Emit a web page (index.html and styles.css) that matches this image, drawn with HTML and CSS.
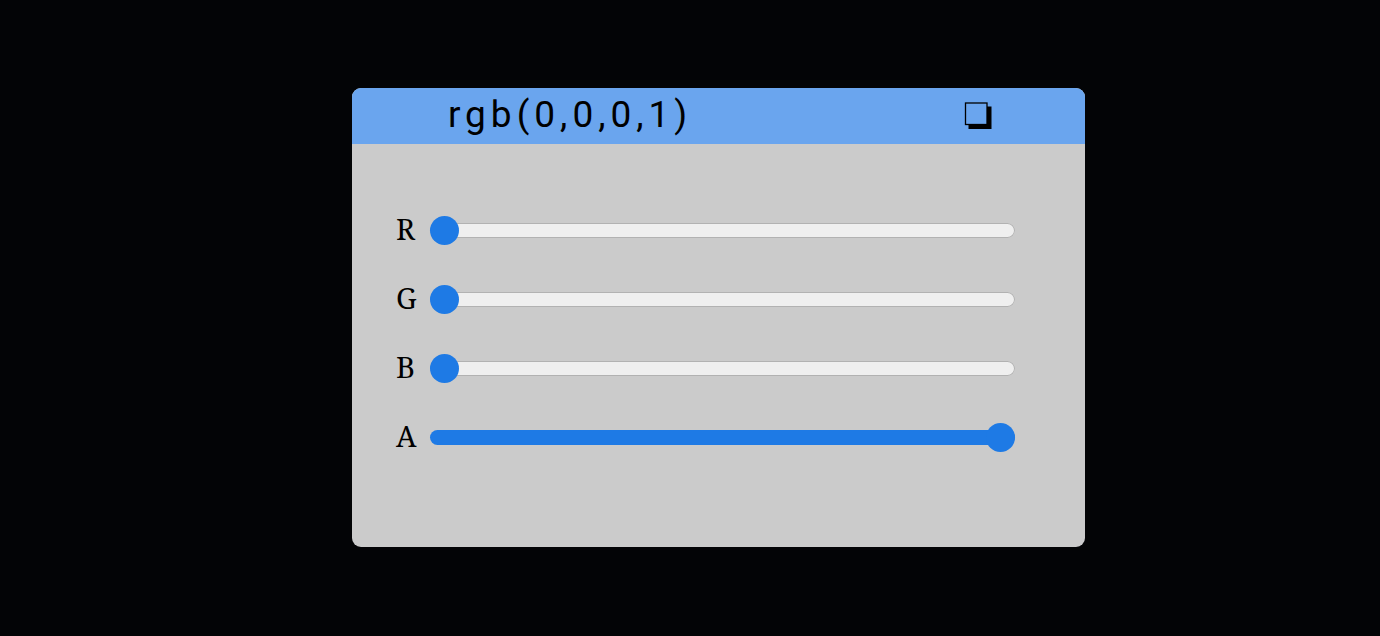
FILE: index.html
```html
<!DOCTYPE html>
<html lang="en">
<head>
<meta charset="utf-8">
<title>Color picker</title>
<meta name="viewport" content="width=device-width, initial-scale=1">
<link rel="stylesheet" href="styles.css">
</head>
<body>
<main class="picker">
  <header class="picker-header">
    <output class="color-code" for="red green blue alpha">rgb(0,0,0,1)</output>
    <button class="copy" type="button" aria-label="Copy color">
      <svg class="copy-icon" viewBox="0 0 28 28" aria-hidden="true">
        <path d="M4.500 22.500H22.500V4.500H27.500V27H4.500Z" fill="#000"/>
        <rect x="1.500" y="1" width="21.500" height="21.500" fill="#6aa5ee" stroke="#000" stroke-width="1.300"/>
      </svg>
    </button>
  </header>
  <div class="channels">
    <div class="channel"><label for="red">R</label><input class="slider" id="red" type="range" min="0" max="255" value="0"></div>
    <div class="channel"><label for="green">G</label><input class="slider" id="green" type="range" min="0" max="255" value="0"></div>
    <div class="channel"><label for="blue">B</label><input class="slider" id="blue" type="range" min="0" max="255" value="0"></div>
    <div class="channel"><label for="alpha">A</label><input class="slider slider-full" id="alpha" type="range" min="0" max="1" step="0.1" value="1"></div>
  </div>
</main>
</body>
</html>
```
FILE: styles.css
```css
* {
  box-sizing: border-box;
}

body {
  margin: 0;
  padding: 88px 0;
  background: #030406;
  color: #000;
}

.picker {
  width: 53.1%;
  margin-left: 25.5%;
  padding-bottom: 90px;
  overflow: hidden;
  border-radius: 9px;
  background: #cbcbcb;
}

.picker-header {
  display: flex;
  align-items: center;
  justify-content: space-between;
  height: 56px;
  padding: 0 93px 0 96px;
  background: #6aa5ee;
}

.color-code {
  padding-bottom: 2px;
  font: 37px/52px Roboto, sans-serif;
  letter-spacing: 5px;
}

.copy {
  display: flex;
  padding: 0;
  border: 0;
  background: none;
}

.copy-icon {
  width: 28px;
  height: 28px;
}

.channels {
  display: grid;
  gap: 29px;
  padding: 66px 70px 0 44px;
}

.channel {
  display: flex;
  align-items: center;
  height: 40px;
}

.channel label {
  width: 34px;
  padding-bottom: 3px;
  font: 29px/37px "Noto Serif", "Droid Serif", "DejaVu Serif", serif;
}

.slider {
  flex: 1;
  min-width: 0;
  height: 30px;
  margin: 0;
  appearance: none;
  background: none;
}

.slider::-webkit-slider-runnable-track {
  height: 15px;
  border-radius: 8px;
  background: #efefef;
  box-shadow: inset 0 0 0 1px #b2b2b2;
}

.slider-full::-webkit-slider-runnable-track {
  background: #1e7ae5;
  box-shadow: none;
}

.slider::-webkit-slider-thumb {
  width: 29px;
  height: 29px;
  margin-top: -7px;
  appearance: none;
  border-radius: 50%;
  background: #1e7ae5;
}
```
